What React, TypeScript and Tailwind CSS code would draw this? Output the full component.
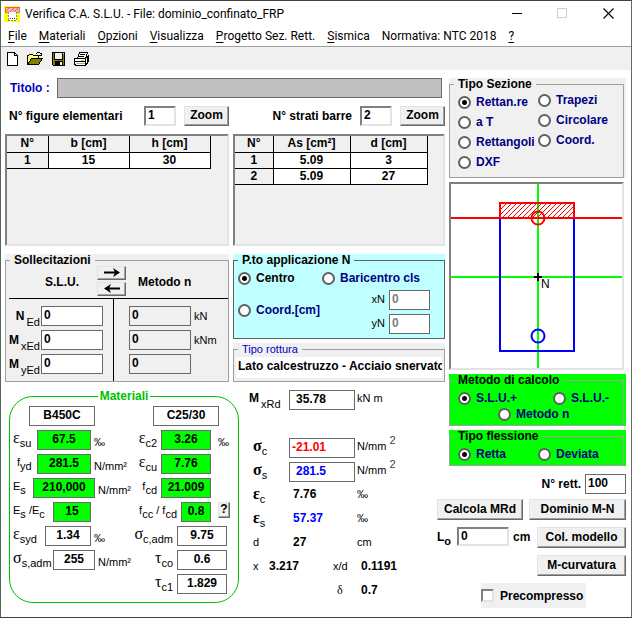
import type { ReactNode } from 'react'
import clsx from 'clsx'

interface GroupProps {
  title: string
  className?: string
  borderClass?: string
  titleClass?: string
  children: ReactNode
}

interface RadioProps {
  name: string
  label: string
  checked?: boolean
  className?: string
}

interface ParamProps {
  id: string
  label: ReactNode
  value: string
  unit?: ReactNode
  labelClass: string
  boxClass: string
}

const menuItems = [
  { key: 'F', rest: 'ile' },
  { key: 'M', rest: 'ateriali' },
  { key: 'O', rest: 'pzioni' },
  { key: 'V', rest: 'isualizza' },
  { key: 'P', rest: 'rogetto Sez. Rett.' },
  { key: 'S', rest: 'ismica' },
  { key: '', rest: 'Normativa: NTC 2018' },
  { key: '?', rest: '' },
]

const inputBase = 'h-5 min-w-0 border border-[#696969] pb-0.5 font-bold outline-none'

function Group({ title, className, borderClass = 'border-[#a0a0a0]', titleClass = 'font-bold', children }: GroupProps) {
  return (
    <div className={clsx('flex', className)}>
      <fieldset className={clsx('min-w-0 flex-1 border', borderClass)}>
        <legend className={clsx('ml-1 px-1 leading-3', titleClass)}>{title}</legend>
        {children}
      </fieldset>
    </div>
  )
}

function Radio({ name, label, checked, className }: RadioProps) {
  return (
    <label className={clsx('flex h-5 items-center gap-[5px] font-bold whitespace-nowrap', className ?? 'text-[#000080]')}>
      <input
        type="radio"
        name={name}
        defaultChecked={checked}
        className="size-[13px] shrink-0 appearance-none rounded-full border-2 border-[#606060] bg-white checked:bg-[radial-gradient(circle,#000_2px,#fff_3px)]"
      />
      {label}
    </label>
  )
}

function PushButton({ children, className }: { children: ReactNode; className?: string }) {
  return (
    <button
      className={clsx(
        'flex items-center justify-center border border-t-[#e3e3e3] border-r-[#696969] border-b-[#696969] border-l-[#e3e3e3] bg-[#f0f0f0] pb-0.5 font-bold whitespace-nowrap shadow-[inset_-1px_-1px_0_#a0a0a0]',
        className,
      )}
    >
      {children}
    </button>
  )
}

function Sub({ children, deep }: { children: ReactNode; deep?: boolean }) {
  return <sub className={clsx('text-[11px] font-normal', deep ? '-bottom-1.5 ml-0.5' : '-bottom-1')}>{children}</sub>
}

function Greek({ children }: { children: ReactNode }) {
  return <span className="font-['Liberation_Serif',serif] text-base leading-4">{children}</span>
}

function Param({ id, label, value, unit, labelClass, boxClass }: ParamProps) {
  return (
    <div className="flex h-5">
      <label htmlFor={id} className={clsx('shrink-0 text-[11px] leading-4 whitespace-nowrap', labelClass)}>
        {label}
      </label>
      <input id={id} defaultValue={value} className={clsx(inputBase, 'shrink-0 text-center', boxClass)} />
      {unit && <span className="pt-1 pl-[3px] text-[11px] leading-4 whitespace-nowrap">{unit}</span>}
    </div>
  )
}

function TitleBar() {
  return (
    <header className="flex h-[25px] items-center bg-white pl-[3px] font-[Roboto,sans-serif]">
      <svg width="16" height="16" viewBox="0 0 16 16" shapeRendering="crispEdges">
        <rect width="16" height="16" fill="#ff0" />
        <path d="M4 6h9v9H4z" fill="#fff" />
        <path d="M2 1h13v5H2z" fill="#f8b0b0" />
        <path d="M2 5l4-4M6 6l5-5M10 6l5-5M2 1h13" stroke="#e06070" />
        <path d="M1.5 1v5.5H4M15.5 1v5.5H13" fill="none" stroke="#c08080" />
        <path d="M4.5 6v9M12.5 6v9M4 14.5h9" fill="none" stroke="#888" strokeDasharray="2 1" />
        <path d="M6 12.5h1M8 12.5h1M10 12.5h1" stroke="#333" />
      </svg>
      <h1 className="ml-[5px] flex-1 text-xs whitespace-nowrap">Verifica C.A. S.L.U. - File: dominio_confinato_FRP</h1>
      <button aria-label="Riduci" className="flex w-[45px] justify-center">
        <svg width="11" height="11" viewBox="0 0 11 11"><path d="M0 5.5h10" stroke="#000" /></svg>
      </button>
      <button aria-label="Ingrandisci" className="flex w-[45px] justify-center">
        <svg width="11" height="11" viewBox="0 0 11 11"><path d="M.5.5h9v9h-9z" fill="none" stroke="#ccc" /></svg>
      </button>
      <button aria-label="Chiudi" className="flex w-[46px] justify-center">
        <svg width="11" height="11" viewBox="0 0 11 11"><path d="M.5.5l10 10M10.5.5l-10 10" stroke="#000" strokeWidth="1.1" /></svg>
      </button>
    </header>
  )
}

function Toolbar() {
  return (
    <div className="flex h-[23px] items-center bg-[#f0f0f0] pl-[5px]">
      <button aria-label="Nuovo">
        <svg width="20" height="16" viewBox="0 0 20 16" shapeRendering="crispEdges">
          <path d="M1.5 1.5h7l3 3v10h-10z" fill="#fff" stroke="#000" />
          <path d="M8.5 1.5v3h3" fill="none" stroke="#000" />
        </svg>
      </button>
      <button aria-label="Apri">
        <svg width="25" height="16" viewBox="0 0 25 16" shapeRendering="crispEdges">
          <path d="M1.5 13.5v-9h1l1-1h3l1 1h5v3" fill="#ffff80" stroke="#000" />
          <path d="M1.5 13.5l4-6h11l-4 6z" fill="#808000" stroke="#000" />
          <path d="M10 2.5h1M11 1.5h3M14 2.5h1M13 4.5h3M15.5 2v3" stroke="#000" />
        </svg>
      </button>
      <button aria-label="Salva">
        <svg width="22" height="16" viewBox="0 0 22 16" shapeRendering="crispEdges">
          <path d="M1.5 1.5h12v13h-11l-1-1z" fill="#808000" stroke="#000" />
          <path d="M4 2h7v6H4z" fill="#f0f0f0" />
          <path d="M3.5 2v6h8V2" fill="none" stroke="#000" />
          <path d="M4 10h8v5H4z" fill="#000" />
          <path d="M9 11h2v3H9z" fill="#f0f0f0" />
          <path d="M12 2h1v1h-1z" fill="#fff" />
        </svg>
      </button>
      <button aria-label="Stampa">
        <svg width="18" height="16" viewBox="0 0 18 16" shapeRendering="crispEdges">
          <path d="M4.5 7.5l2-6h8l-2 6z" fill="#fff" stroke="#000" />
          <path d="M7 3.5h5M6 5.5h5" stroke="#000" />
          <path d="M1.5 7.5h11l3-3v6l-3 4h-10l-1-2z" fill="#fff" stroke="#000" />
          <path d="M12.5 7.5v6M1 10.5h12M14.5 6v5" stroke="#000" />
          <path d="M8 9h3v1H8z" fill="#cc0" />
          <path d="M3 12h9v1H3z" fill="#aaa" />
        </svg>
      </button>
    </div>
  )
}

function DataTable({ head, rows, firstCol, cols }: { head: string[]; rows: string[][]; firstCol: string; cols: string }) {
  return (
    <div className="h-28 border-2 border-t-[#808080] border-r-[#e3e3e3] border-b-[#e3e3e3] border-l-[#808080] bg-[#f0f0f0]">
      <table className="table-fixed border-collapse text-center font-bold">
        <thead>
          <tr>
            {head.map((text, i) => (
              <th key={text} className={clsx('h-4 border-r border-b border-black p-0 leading-[15px]', i === 0 ? firstCol : cols)}>
                {text}
              </th>
            ))}
          </tr>
        </thead>
        <tbody>
          {rows.map((row) => (
            <tr key={row[0]}>
              {row.map((text, i) => (
                <td key={i} className={clsx('h-4 border-r border-b border-black p-0 leading-[15px]', i > 0 && 'bg-white')}>
                  {text}
                </td>
              ))}
            </tr>
          ))}
        </tbody>
      </table>
    </div>
  )
}

function Counter({ id, label, value, className }: { id: string; label: string; value: string; className: string }) {
  return (
    <div className={clsx('flex h-5 items-center gap-2', className)}>
      <label htmlFor={id} className="font-bold whitespace-nowrap">{label}</label>
      <div className="flex gap-2">
        <input id={id} defaultValue={value} className="h-5 w-8 border-2 border-t-[#808080] border-r-[#e3e3e3] border-b-[#e3e3e3] border-l-[#808080] bg-white px-0.5 pb-0.5 font-bold outline-none" />
        <PushButton className="h-5 w-[45px]">Zoom</PushButton>
      </div>
    </div>
  )
}

function Sollecitazioni() {
  const rows = [
    { id: 'n', main: 'N', sub: 'Ed', unit: 'kN' },
    { id: 'mx', main: 'M', sub: 'xEd', unit: 'kNm' },
    { id: 'my', main: 'M', sub: 'yEd', unit: '' },
  ]
  return (
    <Group title="Sollecitazioni" className="bg-[#f0f0f0]">
      <div className="ml-[3px] flex h-8 items-start pl-9 font-bold">
        <span className="w-[52px] pt-2">S.L.U.</span>
        <div className="flex flex-col gap-0.5">
          <PushButton className="h-[14px] w-[29px]">
            <svg width="16" height="9" viewBox="0 0 16 9"><path d="M0 4.5h14" stroke="#000" strokeWidth="2" /><path d="M9 0l7 4.5L9 9l2-4.5z" /></svg>
          </PushButton>
          <PushButton className="h-[14px] w-[29px]">
            <svg width="16" height="9" viewBox="0 0 16 9"><path d="M2 4.5h14" stroke="#000" strokeWidth="2" /><path d="M7 0L0 4.5 7 9 5 4.5z" /></svg>
          </PushButton>
        </div>
        <span className="pt-2 pl-3 whitespace-nowrap">Metodo n</span>
      </div>
      <div className="ml-[3px] flex border-t border-black">
        <div className="flex w-[105px] flex-col gap-1 border-r border-black pt-[7px] pb-[7px]">
          {rows.map((r) => (
            <div key={r.id} className="flex h-5">
              <label htmlFor={r.id} className="w-8 pr-px text-right leading-5 font-bold whitespace-nowrap">{r.main}<Sub deep>{r.sub}</Sub></label>
              <input id={r.id} defaultValue="0" className={clsx(inputBase, 'w-[62px] bg-white px-0.5')} />
            </div>
          ))}
        </div>
        <div className="flex flex-col gap-1 pt-[7px] pl-[15px]">
          {rows.map((r) => (
            <div key={r.id} className="flex h-5">
              <input aria-label={`Metodo n ${r.main} ${r.sub}`} defaultValue="0" className={clsx(inputBase, 'w-[62px] bg-[#f0f0f0] px-0.5')} />
              <span className="pl-[3px] text-[11px] leading-5">{r.unit}</span>
            </div>
          ))}
        </div>
      </div>
    </Group>
  )
}

function Materiali() {
  return (
    <fieldset className="ml-1 w-[230px] shrink-0 rounded-3xl border border-[#00c000] px-[3px] pb-2">
      <legend className="mx-auto px-0.5 leading-3 font-bold text-[#00c000]">Materiali</legend>
      <div className="grid grid-cols-[1fr_102px] pt-1">
        <div className="flex flex-col gap-1">
          <input aria-label="Acciaio" defaultValue="B450C" className={clsx(inputBase, 'ml-4 w-[66px] bg-white text-center')} />
          <Param id="esu" label={<><Greek>ε</Greek><Sub>su</Sub></>} value="67.5" unit="‰" labelClass="w-6" boxClass="w-[54px] bg-[#00ff00]" />
          <Param id="fyd" label={<>f<Sub>yd</Sub></>} value="281.5" unit="N/mm²" labelClass="w-6 pl-1" boxClass="w-[54px] bg-[#00ff00]" />
          <Param id="es" label={<>E<Sub>s</Sub></>} value="210,000" unit="N/mm²" labelClass="w-5" boxClass="w-[62px] bg-[#00ff00]" />
          <Param id="esec" label={<>E<Sub>s</Sub> /E<Sub>c</Sub></>} value="15" labelClass="w-10" boxClass="w-[38px] bg-[#00ff00]" />
          <Param id="esyd" label={<><Greek>ε</Greek><Sub>syd</Sub></>} value="1.34" unit="‰" labelClass="w-8" boxClass="w-[46px] bg-white" />
          <Param id="ssadm" label={<><Greek>σ</Greek><Sub>s,adm</Sub></>} value="255" unit="N/mm²" labelClass="w-10" boxClass="w-[42px] bg-white" />
        </div>
        <div className="flex flex-col gap-1">
          <input aria-label="Calcestruzzo" defaultValue="C25/30" className={clsx(inputBase, 'ml-5 w-[66px] bg-white text-center')} />
          <Param id="ec2" label={<><Greek>ε</Greek><Sub>c2</Sub></>} value="3.26" unit={<span className="pl-1">‰</span>} labelClass="w-7 pr-1 text-right" boxClass="w-[50px] bg-[#00ff00]" />
          <Param id="ecu" label={<><Greek>ε</Greek><Sub>cu</Sub></>} value="7.76" labelClass="w-7 pr-1 text-right" boxClass="w-[50px] bg-[#00ff00]" />
          <Param id="fcd" label={<>f<Sub>cd</Sub></>} value="21.009" labelClass="w-7 pr-1 text-right" boxClass="w-[50px] bg-[#00ff00]" />
          <div className="flex gap-[7px]">
            <Param id="fccfcd" label={<>f<Sub>cc</Sub> / f<Sub>cd</Sub></>} value="0.8" labelClass="w-12 pr-1 text-right" boxClass="w-[30px] bg-[#00ff00]" />
            <PushButton className="h-4 w-3">?</PushButton>
          </div>
          <Param id="scadm" label={<><Greek>σ</Greek><Sub>c,adm</Sub></>} value="9.75" labelClass="w-11 pr-1 text-right" boxClass="w-[50px] bg-white" />
          <Param id="tco" label={<><Greek>τ</Greek><Sub>co</Sub></>} value="0.6" labelClass="w-11 pr-1 text-right" boxClass="w-[50px] bg-white" />
          <Param id="tc1" label={<><Greek>τ</Greek><Sub>c1</Sub></>} value="1.829" labelClass="w-11 pr-1 text-right" boxClass="w-[50px] bg-white" />
        </div>
      </div>
    </fieldset>
  )
}

function Risultati() {
  const row = 'grid h-5 grid-cols-[40px_68px_1fr]'
  const unit = 'text-[11px] leading-4 whitespace-nowrap'
  return (
    <div className="flex min-w-0 flex-1 flex-col gap-1 pl-[10px]">
      <div className={clsx(row, 'mb-6')}>
        <label htmlFor="mxrd" className="leading-4 font-bold">M<Sub deep>xRd</Sub></label>
        <input id="mxrd" readOnly value="35.78" className={clsx(inputBase, 'w-[66px] pl-1.5')} />
        <span className={unit}>kN m</span>
      </div>
      <div className={row}>
        <label htmlFor="sc" className="pl-1 leading-4 font-bold"><Greek>σ</Greek><Sub>c</Sub></label>
        <input id="sc" readOnly value="-21.01" className={clsx(inputBase, 'w-[66px] pl-0.5 text-[#ff0000]')} />
        <span className={unit}>N/mm <sup className="-top-1.5 text-[11px] text-[#404040]">2</sup></span>
      </div>
      <div className={row}>
        <label htmlFor="ss" className="pl-1 leading-4 font-bold"><Greek>σ</Greek><Sub>s</Sub></label>
        <input id="ss" readOnly value="281.5" className={clsx(inputBase, 'w-[66px] pl-1.5 text-[#0000ff]')} />
        <span className={unit}>N/mm <sup className="-top-1.5 text-[11px] text-[#404040]">2</sup></span>
      </div>
      <div className={row}>
        <span className="pl-1 leading-4 font-bold"><Greek>ε</Greek><Sub>c</Sub></span>
        <output className="pl-1 leading-4 font-bold">7.76</output>
        <span className={unit}>‰</span>
      </div>
      <div className={row}>
        <span className="pl-1 leading-4 font-bold"><Greek>ε</Greek><Sub>s</Sub></span>
        <output className="pl-1 leading-4 font-bold text-[#0000ff]">57.37</output>
        <span className={unit}>‰</span>
      </div>
      <div className={row}>
        <span className="pl-1 text-[11px] leading-4">d</span>
        <output className="pl-1 leading-4 font-bold">27</output>
        <span className={unit}>cm</span>
      </div>
      <div className="grid h-5 grid-cols-[20px_64px_28px_1fr] leading-4">
        <span className="pl-1 text-[11px]">x</span>
        <output className="font-bold">3.217</output>
        <span className="text-[11px]">x/d</span>
        <output className="font-bold">0.1191</output>
      </div>
      <div className="grid h-5 grid-cols-[84px_28px_1fr] leading-4">
        <span className="col-start-2 pl-1 font-['Liberation_Serif',serif]">δ</span>
        <output className="font-bold">0.7</output>
      </div>
    </div>
  )
}

function SectionView() {
  return (
    <div className="mr-0.5 border-2 border-t-[#808080] border-r-[#e3e3e3] border-b-[#e3e3e3] border-l-[#808080] bg-white">
      <svg className="block h-[184px] w-full" viewBox="0 0 171 184">
        <defs>
          <pattern id="hatch" width="5" height="5" patternUnits="userSpaceOnUse">
            <path d="M-1 6L6-1M-1 1l2-2M4 6l2-2" stroke="#f00" strokeWidth="1" />
          </pattern>
        </defs>
        <path d="M87 0v184M0 93h171" stroke="#0f0" strokeWidth="2" />
        <path d="M49 34v133h74V34" fill="none" stroke="#00f" strokeWidth="2" />
        <rect x="49" y="19" width="74" height="15" fill="url(#hatch)" stroke="#f00" strokeWidth="2" />
        <path d="M0 34h171" stroke="#f00" strokeWidth="2" />
        <circle cx="87" cy="34" r="6.5" fill="none" stroke="#f00" strokeWidth="2" />
        <circle cx="87" cy="152" r="6.5" fill="none" stroke="#00f" strokeWidth="2" />
        <path d="M83 93h8M87 89v8" stroke="#000" strokeWidth="2" />
        <text x="90" y="104" fontSize="12" fontFamily="Liberation Sans, sans-serif">N</text>
      </svg>
    </div>
  )
}

function Comandi() {
  return (
    <div className="mt-1 -ml-3 flex flex-col gap-[5px]">
      <div className="flex items-center justify-end gap-1">
        <label htmlFor="nrett" className="font-bold">N° rett.</label>
        <input id="nrett" defaultValue="100" className={clsx(inputBase, 'w-[41px] bg-white px-0.5')} />
      </div>
      <div className="flex justify-between">
        <PushButton className="h-[21px] w-[86px]">Calcola MRd</PushButton>
        <PushButton className="h-[21px] w-[97px]">Dominio M-N</PushButton>
      </div>
      <div className="flex justify-between pt-0.5">
        <div className="flex items-start">
          <label htmlFor="l0" className="w-5 pt-0.5 font-bold">L<sub className="-bottom-1 text-[11px]">o</sub></label>
          <input id="l0" defaultValue="0" className="h-[19px] w-[52px] border-2 border-t-[#808080] border-r-[#e3e3e3] border-b-[#e3e3e3] border-l-[#808080] bg-white px-0.5 pb-0.5 font-bold outline-none" />
          <span className="pt-0.5 pl-1 font-bold">cm</span>
        </div>
        <PushButton className="h-[21px] w-[89px]">Col. modello</PushButton>
      </div>
      <div className="flex justify-end pt-0.5">
        <PushButton className="h-[21px] w-[89px]">M-curvatura</PushButton>
      </div>
      <label className="mt-0.5 mr-10 flex h-[25px] w-[105px] items-center gap-[6px] self-end bg-[#f0f0f0] font-bold">
        <input type="checkbox" className="size-[13px] appearance-none border-2 border-t-[#808080] border-r-[#e3e3e3] border-b-[#e3e3e3] border-l-[#808080] bg-white checked:bg-black" />
        Precompresso
      </label>
    </div>
  )
}

export default function App() {
  return (
    <div className="flex min-h-screen flex-col border border-t-[#404040] border-r-[#696969] border-b-[#404040] border-l-[#506858] bg-white font-['Liberation_Sans',Arial,sans-serif] text-xs text-black">
      <TitleBar />
      <nav className="flex h-5 items-center gap-3 pl-[7px] font-[Roboto,sans-serif] text-xs whitespace-nowrap">
        {menuItems.map((item) => (
          <a key={item.key + item.rest} href="#">
            <span className="underline underline-offset-2">{item.key}</span>{item.rest}
          </a>
        ))}
      </nav>
      <hr className="border-[#a0a0a0]" />
      <Toolbar />

      <main className="flex gap-1 pt-2 pr-[5px] pl-1">
        <div className="flex min-w-0 flex-1 flex-col gap-2">
          <div className="flex h-5 items-center pr-[3px]">
            <label htmlFor="titolo" className="w-[52px] pl-[5px] font-bold text-[#0000c0]">Titolo :</label>
            <input id="titolo" className="h-5 min-w-0 flex-1 border border-[#696969] bg-[#c0c0c0] px-1 outline-none" />
          </div>

          <div className="grid grid-cols-[224fr_212fr] gap-1">
            <Counter id="figure" label="N° figure elementari" value="1" className="justify-between pl-1" />
            <Counter id="barre" label="N° strati barre" value="2" className="justify-end" />
          </div>

          <div className="grid grid-cols-[224fr_212fr] gap-1">
            <DataTable head={['N°', 'b [cm]', 'h [cm]']} rows={[['1', '15', '30']]} firstCol="w-[41px]" cols="w-[81px]" />
            <DataTable head={['N°', 'As [cm²]', 'd [cm]']} rows={[['1', '5.09', '3'], ['2', '5.09', '27']]} firstCol="w-[38px]" cols="w-[77px]" />
          </div>

          <div className="grid grid-cols-[224fr_212fr] gap-1">
            <Sollecitazioni />
            <div className="flex min-w-0 flex-col gap-1">
              <Group title="P.to applicazione N" className="bg-[#c0ffff]" borderClass="border-[#606060]">
                <div className="flex h-6 items-center pl-1">
                  <Radio name="pto" label="Centro" checked className="w-[84px]" />
                  <Radio name="pto" label="Baricentro cls" />
                </div>
                <div className="flex justify-between pr-[14px] pb-1 pl-1">
                  <Radio name="pto" label="Coord.[cm]" className="mt-[10px] text-[#000080]" />
                  <div className="flex flex-col gap-1">
                    <div className="flex gap-1">
                      <label htmlFor="xn" className="pt-0.5 text-[11px]">xN</label>
                      <input id="xn" defaultValue="0" className={clsx(inputBase, 'w-[41px] bg-white px-0.5 text-[#808080]')} />
                    </div>
                    <div className="flex gap-1">
                      <label htmlFor="yn" className="pt-0.5 text-[11px]">yN</label>
                      <input id="yn" defaultValue="0" className={clsx(inputBase, 'w-[41px] bg-white px-0.5 text-[#808080]')} />
                    </div>
                  </div>
                </div>
              </Group>
              <Group title="Tipo rottura" className="bg-[#f0f0f0]" titleClass="text-[11px] text-[#0000c0]">
                <div className="flex px-0.5 pt-0.5 pb-[3px]">
                  <input aria-label="Tipo rottura" readOnly value="Lato calcestruzzo - Acciaio snervato" className="h-[21px] min-w-0 flex-1 bg-white pb-1 pl-0.5 font-bold outline-none" />
                </div>
              </Group>
            </div>
          </div>

          <div className="flex items-start">
            <Materiali />
            <Risultati />
          </div>
        </div>

        <aside className="flex w-[177px] shrink-0 flex-col gap-1">
          <Group title="Tipo Sezione" className="h-[100px] bg-[#f0f0f0] pr-0.5">
            <div className="grid grid-cols-[80px_1fr] pl-2">
              <div className="pt-0.5">
                <Radio name="sezione" label="Rettan.re" checked />
                <Radio name="sezione" label="a T" />
                <Radio name="sezione" label="Rettangoli" />
                <Radio name="sezione" label="DXF" />
              </div>
              <div>
                <Radio name="sezione" label="Trapezi" />
                <Radio name="sezione" label="Circolare" />
                <Radio name="sezione" label="Coord." />
              </div>
            </div>
          </Group>
          <SectionView />
          <Group title="Metodo di calcolo" className="h-[52px] bg-[#00ff00] pr-0.5">
            <div className="flex h-4 items-center gap-9 pt-2 pl-2">
              <Radio name="metodo" label="S.L.U.+" checked />
              <Radio name="metodo" label="S.L.U.-" />
            </div>
            <div className="flex h-4 items-center pt-2 pl-12">
              <Radio name="metodo" label="Metodo n" />
            </div>
          </Group>
          <Group title="Tipo flessione" className="h-9 bg-[#00ff00] pr-0.5">
            <div className="grid grid-cols-[80px_1fr] pt-0.5 pl-2">
              <Radio name="flessione" label="Retta" checked />
              <Radio name="flessione" label="Deviata" />
            </div>
          </Group>
          <Comandi />
        </aside>
      </main>
    </div>
  )
}
